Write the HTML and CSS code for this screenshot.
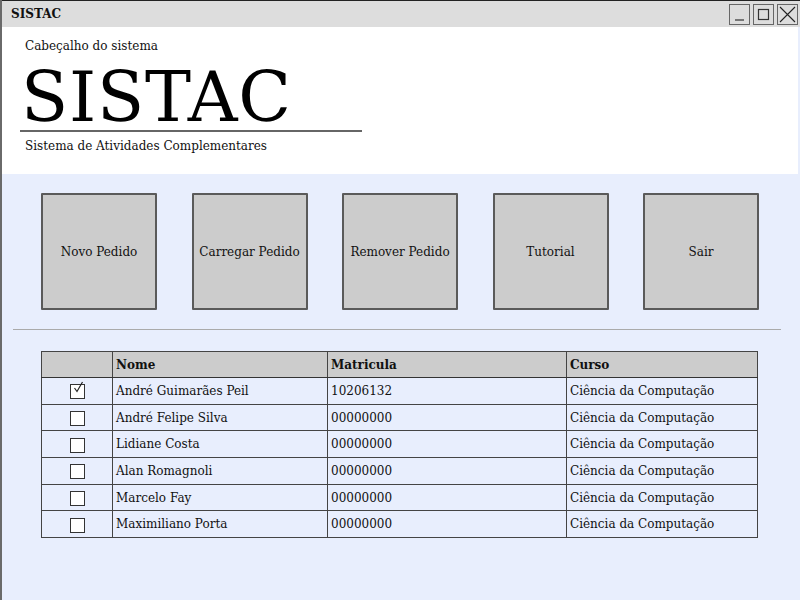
FILE: index.html
```html
<!DOCTYPE html>
<html lang="pt">
<head>
<meta charset="utf-8">
<title>SISTAC</title>
<link rel="stylesheet" href="styles.css">
</head>
<body>
<div class="window">
  <div class="titlebar">
    <span class="title">SISTAC</span>
    <div class="controls">
      <span class="ctl"><svg width="19" height="19" viewBox="0 0 19 19"><path d="M5 15H14" stroke="#333" stroke-width="1.2"/></svg></span>
      <span class="ctl"><svg width="19" height="19" viewBox="0 0 19 19"><rect x="4.5" y="4.5" width="10" height="10" fill="none" stroke="#333" stroke-width="1.2"/></svg></span>
      <span class="ctl"><svg width="19" height="19" viewBox="0 0 19 19"><path d="M2 2L17 17M17 2L2 17" stroke="#222" stroke-width="1.1"/></svg></span>
    </div>
  </div>
  <div class="header">
    <div class="caption">Cabeçalho do sistema</div>
    <div class="logo">SISTAC</div>
    <div class="rule"></div>
    <div class="subtitle">Sistema de Atividades Complementares</div>
  </div>
  <div class="content">
    <div class="buttons">
      <div class="btn">Novo Pedido</div>
      <div class="btn">Carregar Pedido</div>
      <div class="btn">Remover Pedido</div>
      <div class="btn">Tutorial</div>
      <div class="btn">Sair</div>
    </div>
    <div class="sep"></div>
    <table class="grid">
      <thead>
        <tr><th class="c0"></th><th class="c1">Nome</th><th class="c2">Matricula</th><th class="c3">Curso</th></tr>
      </thead>
      <tbody>
        <tr><td class="chk"><span class="box"><svg width="13" height="13" viewBox="0 0 13 13"><path d="M2.5 7L5 10.5L10.5 1" fill="none" stroke="#222" stroke-width="1.2"/></svg></span></td><td>André Guimarães Peil</td><td>10206132</td><td>Ciência da Computação</td></tr>
        <tr><td class="chk"><span class="box"></span></td><td>André Felipe Silva</td><td>00000000</td><td>Ciência da Computação</td></tr>
        <tr><td class="chk"><span class="box"></span></td><td>Lidiane Costa</td><td>00000000</td><td>Ciência da Computação</td></tr>
        <tr><td class="chk"><span class="box"></span></td><td>Alan Romagnoli</td><td>00000000</td><td>Ciência da Computação</td></tr>
        <tr><td class="chk"><span class="box"></span></td><td>Marcelo Fay</td><td>00000000</td><td>Ciência da Computação</td></tr>
        <tr><td class="chk"><span class="box"></span></td><td>Maximiliano Porta</td><td>00000000</td><td>Ciência da Computação</td></tr>
      </tbody>
    </table>
  </div>
</div>
</body>
</html>
```
FILE: styles.css
```css
html, body {
  margin: 0;
  padding: 0;
}
body {
  font-family: "DejaVu Serif", serif;
  font-size: 12px;
  color: #111;
  background: #e8eefd;
}
.window {
  width: 800px;
  height: 600px;
  box-sizing: border-box;
  border-left: 2px solid #6a6a6a;
  background: #e8eefd;
  display: flex;
  flex-direction: column;
}
.titlebar {
  height: 27px;
  box-sizing: border-box;
  border-top: 1px solid #222;
  background: #dddddd;
  display: flex;
  align-items: center;
  justify-content: space-between;
  padding-left: 9px;
  padding-right: 2px;
}
.title {
  font-weight: bold;
  font-size: 12px;
  color: #111;
}
.controls {
  display: flex;
  gap: 3px;
  padding-top: 1px;
}
.ctl {
  width: 19px;
  height: 19px;
  border: 1px solid #666;
  box-sizing: content-box;
  display: flex;
  align-items: center;
  justify-content: center;
  background: #dddddd;
}
.ctl svg {
  width: 19px;
  height: 19px;
}
.header {
  background: #fff;
  height: 147px;
  margin-right: 2px;
  box-sizing: border-box;
  padding: 11px 0 0 23px;
}
.caption {
  line-height: 16px;
}
.logo {
  font-size: 69px;
  line-height: 66px;
  margin-top: 10px;
  margin-left: -4px;
  letter-spacing: 0.7px;
  color: #000;
}
.rule {
  width: 342px;
  height: 1.5px;
  background: #666;
  margin-left: -5px;
}
.subtitle {
  margin-top: 6px;
  line-height: 16px;
}
.content {
  padding: 19px 0 0 11px;
}
.buttons {
  display: flex;
  gap: 34.5px;
  padding-left: 28px;
}
.btn {
  width: 112px;
  height: 112px;
  background: #cccccc;
  border: 2px solid #5a5a5a;
  border-radius: 1px;
  display: flex;
  align-items: center;
  justify-content: center;
  color: #111;
  padding-top: 1px;
}
.sep {
  width: 768px;
  height: 1px;
  background: #aaa;
  margin-top: 19px;
}
.grid {
  border-collapse: collapse;
  margin-top: 21px;
  margin-left: 28px;
  width: 717px;
  table-layout: fixed;
  border: 1.5px solid #222;
}
.grid th, .grid td {
  border: 1px solid #444;
  padding: 0 3px;
  text-align: left;
  white-space: nowrap;
}
.grid th {
  height: 25px;
  background: #cccccc;
  font-weight: bold;
  border-bottom: 1.5px solid #333;
}
.grid td {
  height: 25.7px;
}
.c0 { width: 64px; }
.c1 { width: 208px; }
.c2 { width: 232px; }
.c3 { width: 184px; }
.grid td.chk {
  text-align: center;
  padding: 0;
}
.box {
  display: inline-block;
  width: 13px;
  height: 13px;
  border: 1px solid #333;
  background: #fff;
  vertical-align: middle;
  position: relative;
  top: 1px;
}
.box svg {
  display: block;
  position: absolute;
  left: 1px;
  top: -4px;
}
```
